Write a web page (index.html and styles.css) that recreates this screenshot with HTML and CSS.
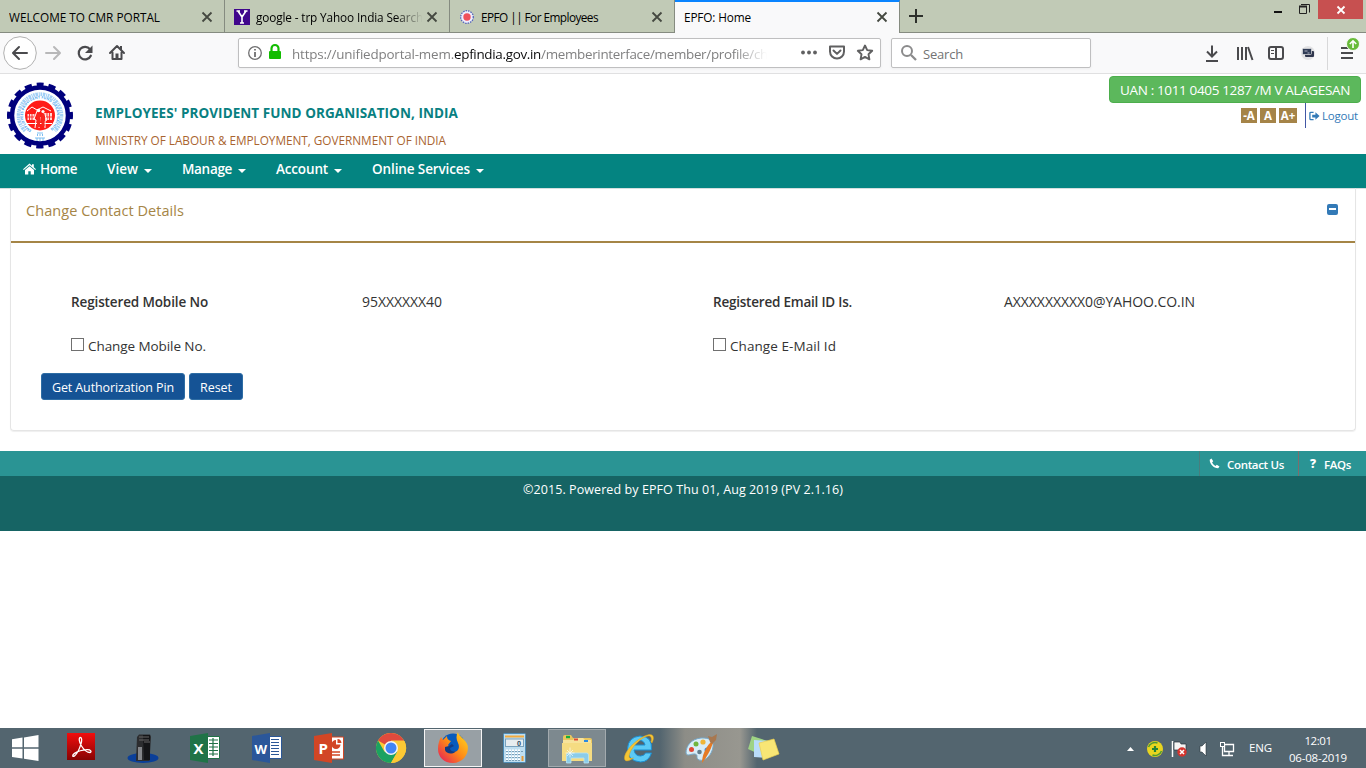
FILE: index.html
```html
<!DOCTYPE html>
<html lang="en">
<head>
<meta charset="utf-8">
<title>EPFO: Home</title>
<link rel="stylesheet" href="styles.css">
</head>
<body>
<div class="tabs">
  <div class="tab"><span class="tab-name"><span class="t s-tab1">WELCOME TO CMR PORTAL</span></span><svg class="x" viewBox="0 0 12 12"><path d="M1.500 1.500l9 9M10.500 1.500l-9 9"/></svg></div>
  <div class="tab"><svg class="fav" viewBox="0 0 16 16"><rect width="16" height="16" fill="#40068c"/><path d="M4 2l4 6 4-6M8 8v6M2.500 2h3.500M10 2h3.500M6 14h4" fill="none" stroke="#fff" stroke-width="1.600"/></svg><span class="tab-name fade"><span class="t s-tab2">google - trp Yahoo India Search</span></span><svg class="x" viewBox="0 0 12 12"><path d="M1.500 1.500l9 9M10.500 1.500l-9 9"/></svg></div>
  <div class="tab"><svg class="fav" viewBox="0 0 16 16"><circle cx="8" cy="8" r="6.300" fill="#eef" stroke="#5364b8" stroke-width="1.300" stroke-dasharray="1.500 1"/><circle cx="8" cy="8" r="3.700" fill="#f0505a"/></svg><span class="tab-name"><span class="t s-tab3">EPFO || For Employees</span></span><svg class="x" viewBox="0 0 12 12"><path d="M1.500 1.500l9 9M10.500 1.500l-9 9"/></svg></div>
  <div class="tab active"><span class="tab-name"><span class="t s-tab4">EPFO: Home</span></span><svg class="x" viewBox="0 0 12 12"><path d="M1.500 1.500l9 9M10.500 1.500l-9 9"/></svg></div>
  <div class="tab-rest">
    <svg class="plus" viewBox="0 0 14 14"><path d="M7 0v14M0 7h14" stroke="#2d302b" stroke-width="2"/></svg>
    <svg class="win" viewBox="0 0 50 20"><path d="M5 12h8" stroke="#111" stroke-width="2"/><path d="M30.500 6.500h7v7h-7z" fill="none" stroke="#222"/><path d="M30 6.500h8" stroke="#222" stroke-width="2"/><path d="M32 4.500h8.500v8" fill="none" stroke="#222"/></svg>
    <div class="close"><svg viewBox="0 0 10 10"><path d="M1.500 1.500l7 7M8.500 1.500l-7 7" stroke="#fff" stroke-width="1.800"/></svg></div>
  </div>
</div>
<div class="toolbar">
  <svg class="nav-icons" viewBox="0 0 238 40">
    <circle cx="20" cy="20" r="16.300" fill="#fff" stroke="#b1b1b1"/>
    <g fill="none" stroke="#4a4a4d" stroke-width="2" stroke-linecap="round" stroke-linejoin="round"><path d="M27 20H13.500M19 14l-6 6 6 6"/><path d="M46 20h13M54 14l6 6-6 6" stroke="#b8b8b9"/><path d="M90 16.200a6.300 6.300 0 1 0 .8 6.500" stroke-width="2.200"/></g>
    <path d="M92.500 12.500v7.500h-7.500z" fill="#4a4a4d"/>
    <path d="M110 20l7-7 7 7M112.500 19.500v6.500h9v-6.500" fill="none" stroke="#4a4a4d" stroke-width="2" stroke-linejoin="round" stroke-linecap="round"/><path d="M115.500 20.500h3v5.500h-3zM120 13h2v4h-2z" fill="#4a4a4d"/>
  </svg>
  <div class="urlbar">
    <svg class="info" viewBox="0 0 50 28"><circle cx="16" cy="14" r="6.300" fill="none" stroke="#6f6f70" stroke-width="1.300"/><path d="M16 13v5M16 10v1.600" stroke="#6f6f70" stroke-width="1.800"/><rect x="30" y="12" width="12" height="8" rx="1" fill="#12bc00"/><path d="M32.500 13v-3.500a3.500 3.500 0 0 1 7 0V13" fill="none" stroke="#12bc00" stroke-width="2.200"/></svg>
    <div class="url"><span class="t s-url1">https://unifiedportal-mem.</span><span class="t s-url2 dark">epfindia.gov.in</span><span class="t s-url3">/memberinterface/member/profile/ch</span></div>
    <svg class="acts" viewBox="0 0 90 28"><g fill="#606061"><circle cx="13" cy="13.500" r="1.900"/><circle cx="19" cy="13.500" r="1.900"/><circle cx="25" cy="13.500" r="1.900"/></g><path d="M40 7.500h14v5a7 7 0 0 1-14 0zM43.500 11.500l3.500 3.400 3.500-3.400" fill="none" stroke="#606061" stroke-width="2" stroke-linejoin="round" stroke-linecap="round"/><path d="M75 6.500l2.200 4.600 5 .7-3.700 3.500.9 5L75 17.900l-4.400 2.400.9-5-3.700-3.500 5-.7z" fill="none" stroke="#606061" stroke-width="1.900" stroke-linejoin="round"/></svg>
  </div>
  <div class="search"><svg viewBox="0 0 18 18"><circle cx="7" cy="7" r="5" fill="none" stroke="#8b8b8c" stroke-width="2"/><path d="M11 11l5 5" stroke="#8b8b8c" stroke-width="2.300"/></svg><span class="t s-search">Search</span></div>
  <svg class="right-icons" viewBox="0 0 166 40">
    <g fill="none" stroke="#4a4a4d" stroke-width="2"><path d="M12 12.500v11M7 18.500l5 5 5-5M6 28h12"/><path d="M38 14v13M42 14v13M46 14v13M48 14l4.500 13"/><rect x="69" y="14" width="14" height="12" rx="2"/><path d="M76 14v12"/><path d="M71 17.500h3M71 20.500h3" stroke-width="1"/></g>
    <circle cx="108" cy="20" r="7" fill="#e2e2e4"/><rect x="105" y="18" width="9" height="6" rx="1" fill="#30364d"/><rect x="102.500" y="15.500" width="9" height="6" rx="1" fill="#303c55" stroke="#e2e2e4" stroke-width=".7"/><path d="M104.500 18h3M107.500 20h2" stroke="#ccd" stroke-width=".8"/>
    <path d="M127.500 4v33" stroke="#d8d8d9"/><path d="M141 15h12M141 20h12M141 25h12" stroke="#4a4a4d" stroke-width="2"/>
    <circle cx="153" cy="11" r="6.500" fill="#68bb38" stroke="#f9f9fa"/><path d="M153 15V8M149.800 11l3.200-3.200 3.200 3.200" fill="none" stroke="#fff" stroke-width="1.600"/>
  </svg>
</div>
<main class="page">
  <header class="head">
    <svg class="logo" viewBox="0 0 80 80">
      <circle cx="40" cy="41.500" r="28" fill="#fff" stroke="#00007d" stroke-width="4.500"/>
      <circle cx="40" cy="41.500" r="31" fill="none" stroke="#00007d" stroke-width="4" stroke-dasharray="7.200 4.974" stroke-dashoffset="3.600" transform="rotate(-90 40 41.500)"/>
      <path d="M25 57a21.500 21.500 0 1 1 30 0" fill="none" stroke="#8bc4f4" stroke-width="3.600" stroke-dasharray="1.600 .7 2.500 .8 1 .7" opacity=".8"/>
      <circle cx="40" cy="41.500" r="15" fill="#ff1c18"/>
      <path id="ring" d="M31.500 56.200a17 17 0 1 1 17 0" fill="none"/>
      <text class="ring-text"><textPath href="#ring" textLength="86">EMPLOYEES PROVIDENT FUND ORGANISATION</textPath></text>
      <path d="M27 37l5-4 5 3 6-3 8 4M27 49.500h25" fill="none" stroke="#fff" stroke-width="1"/><path d="M27.500 40h7v6h-7zM45 39h7v7h-7z" fill="#ffd9d3"/><path d="M29.500 40v6M32 40v6M47 39v7M49.500 39v7M27 43h8M45 43h7" stroke="#f33"/><path d="M37 37l-3 8 2 1-1 8M44 39l3 7-2 1v7M40 43l-1 11" fill="none" stroke="#fff" stroke-width="1"/><circle cx="38.500" cy="36.500" r="1.800" fill="#fff"/><circle cx="43" cy="37.500" r="1.600" fill="#fff"/><path d="M37 40h3v13h-3zM41.500 40h3v12h-3z" fill="#f62720"/>
      <path d="M37 59h6M37.500 60v2M40 60v2M42.500 60v2M35 64h10M37 64v3M40 64v3M43 64v3" stroke="#6db7ef" stroke-width=".9"/>
    </svg>
    <div class="org"><div class="org-name"><span class="t s-org">EMPLOYEES' PROVIDENT FUND ORGANISATION, INDIA</span></div><div class="ministry"><span class="t s-min">MINISTRY OF LABOUR &amp; EMPLOYMENT, GOVERNMENT OF INDIA</span></div></div>
    <div class="user"><div class="uan"><span class="t s-uan">UAN : 1011 0405 1287 /M V ALAGESAN</span></div>
      <div class="tools"><b class="sz">-A</b><b class="sz">A</b><b class="sz wide">A+</b><div class="logout"><svg viewBox="0 0 12 10"><path d="M5 1H2Q1 1 1 2v6q0 1 1 1h3" fill="none" stroke="#337ab7" stroke-width="1.400"/><path d="M3.500 3.500H7V1l4.500 4L7 9V6.500H3.500z" fill="#337ab7"/></svg><span class="t s-logout">Logout</span></div></div></div>
  </header>
  <nav class="menu">
    <a class="m1"><svg class="house" viewBox="0 0 13 12"><path d="M6.500.5L9 2.700V1.200h1.800v3.100L13 6.200l-.8.900L6.500 2.200.8 7.100 0 6.200zM6.500 3.200L11 7v4.500H7.700V8.200H5.300v3.300H2V7z" fill="#fff"/></svg><span class="t s-home">Home</span></a>
    <a class="m2"><span class="t s-view">View</span><i class="caret"></i></a>
    <a class="m3"><span class="t s-manage">Manage</span><i class="caret"></i></a>
    <a class="m4"><span class="t s-account">Account</span><i class="caret"></i></a>
    <a class="m5"><span class="t s-online">Online Services</span><i class="caret"></i></a>
  </nav>
  <section class="panel">
    <div class="panel-head"><span class="t s-ccd">Change Contact Details</span><i class="minus"></i></div>
    <div class="grid">
      <b><span class="t s-rm">Registered Mobile No</span></b><span><span class="t s-95">95XXXXXX40</span></span><b><span class="t s-re">Registered Email ID Is.</span></b><span><span class="t s-ax">AXXXXXXXXX0@YAHOO.CO.IN</span></span>
    </div>
    <div class="checks"><label><i class="box"></i><span class="t s-cm">Change Mobile No.</span></label><label><i class="box"></i><span class="t s-ce">Change E-Mail Id</span></label></div>
    <div class="btns"><div class="btn pin"><span class="t s-pin">Get Authorization Pin</span></div><div class="btn reset"><span class="t s-reset">Reset</span></div></div>
  </section>
  <div class="links">
    <div class="link contact"><svg viewBox="0 0 11 11"><path d="M2.500.5L.7 1.800C.5 6 5 10.500 9.200 10.300l1.300-1.800-2.700-1.700-1.300 1.100C5 7.200 3.800 6 3.100 4.500l1.100-1.300z" fill="#fff"/></svg><span class="t s-cu">Contact Us</span></div>
    <div class="link faq"><b>?</b><span class="t s-faq">FAQs</span></div>
  </div>
  <footer class="foot"><span class="t s-foot">©2015. Powered by EPFO Thu 01, Aug 2019 (PV 2.1.16)</span></footer>
</main>
<div class="taskbar">
  <div class="start"><svg viewBox="0 0 28 28"><path d="M1 5.200l10.500-1.600v9.700H1zM13 3.400L27.500 1v12.300H13zM1 14.700h10.500v9.800L1 23zM13 14.700h14.500V27L13 24.700z" fill="#fff"/></svg></div>
  <div class="slot"><svg viewBox="0 0 40 40"><defs><linearGradient id="ac" x2="0" y2="1"><stop stop-color="#f20d0d"/><stop offset="1" stop-color="#870303"/></linearGradient></defs><rect x="6" y="5" width="28" height="27" fill="url(#ac)"/><path d="M19.500 9.500c-2 0-1.500 4.500 1 8.500s6 6.500 8.500 6.500c2-.5 1-3-3-2.800-5 .3-9 1.500-12.500 3.700-2.500 1.700-2.300 4 0 2.500 2.500-2 5-7 6.500-12 .9-3 1-6.400-.5-6.400z" fill="none" stroke="#fff" stroke-width="1.300"/></svg></div>
  <div class="slot"><svg viewBox="0 0 40 40"><ellipse cx="20" cy="30" rx="15.500" ry="5" fill="#0a3f99"/><path d="M14 9l2-2.500h11l1 2L26.500 33H13z" fill="#2c2d2f"/><path d="M15 19h4v13h-4z" fill="#84868a"/><path d="M20 7h7v25h-6z" fill="#141517"/><path d="M16 9h10M16 12h10M21 14h6" stroke="#666"/></svg></div>
  <div class="slot"><svg viewBox="0 0 40 40"><path d="M22 8.500h12.500v22H22z" fill="#fff" stroke="#207347"/><path d="M24 12h9M24 15.500h9M24 19h9M24 22.500h9M24 26h9M28 10v18" stroke="#207347" stroke-width="1.200"/><path d="M5 8l18-3v30L5 32z" fill="#207347"/><text x="8.500" y="26" class="office">X</text></svg></div>
  <div class="slot"><svg viewBox="0 0 40 40"><path d="M22 8.500h12.500v22H22z" fill="#fff" stroke="#2b5797"/><path d="M24 11.500h8M24 14.500h8M24 17.500h8M24 20.500h8M24 23.500h8M24 26.500h8" stroke="#2b5797" stroke-width="1.200"/><path d="M5 8l18-3v30L5 32z" fill="#2b579a"/><text x="7.500" y="25.500" class="office word">W</text></svg></div>
  <div class="slot"><svg viewBox="0 0 40 40"><path d="M22 9h12.500v22H22z" fill="#fff" stroke="#d24625"/><path d="M27 12a4.500 4.500 0 1 0 4.500 4.500H27zM28.500 11v4h4q-.5-4-4-4z" fill="#d24625"/><path d="M23 24h8M23 27h8" stroke="#d24625" stroke-width="1.300"/><path d="M5 8l18-3v30L5 32z" fill="#d24625"/><text x="9.500" y="26" class="office">P</text></svg></div>
  <div class="slot"><svg viewBox="0 0 40 40"><circle cx="20" cy="20" r="15" fill="#fcc934"/><path d="M20 20L7 12.500A15 15 0 0 1 33 12.500H20z" fill="#df4a3d"/><path d="M7 12.500A15 15 0 0 0 20 35l6.500-11.200L20 20 13.500 23.800z" fill="#1ba261"/><path d="M20 13h13.500A15 15 0 0 1 20 35l6.500-11.500z" fill="#fcc934"/><circle cx="20" cy="20" r="7" fill="#f4f4f4"/><circle cx="20" cy="20" r="5.500" fill="#4285f4"/></svg></div>
  <div class="slot tile on"><svg viewBox="0 0 40 40"><defs><linearGradient id="fx" x1="1" x2="0" y2="1"><stop stop-color="#ffdd22"/><stop offset=".5" stop-color="#ff8a16"/><stop offset="1" stop-color="#e31360"/></linearGradient></defs><circle cx="20" cy="18" r="12.500" fill="#075bbd"/><path d="M25 4c0 4 8 7 9.800 14C36 27 29 35 20 35S5 29 5 21c0-5 1-8 3-12l2 3 4-4c0 3 1 4 4 5l-3 4 1 2-2 1c0 5 6 6 9 3l-3 1c6 0 7-5 5-9-2-4-2-8 0-11z" fill="url(#fx)"/><path d="M12 19l4-1 3-2 2 2-4 2c0 3 3 4 6 3-3 4-10 3-11-1z" fill="#123b83"/></svg></div>
  <div class="slot"><svg viewBox="0 0 40 40"><rect x="8.500" y="5.500" width="22" height="29" rx="1" fill="#bfdef0" stroke="#4d8cb7"/><path d="M10 8.500h19" stroke="#f3aa3c" stroke-width="2"/><rect x="10.500" y="11" width="18" height="7.500" fill="#e7edf0" stroke="#7aa2bd"/><text x="22" y="18" class="zero">0</text><path d="M11 22.500h15M11 25.500h15M11 28.500h15M11 31.500h15" stroke="#fff" stroke-width="2.200" stroke-dasharray="2 1"/><path d="M11 23.500h18M11 26.500h15M11 29.500h15M11 32.500h15" stroke="#628ba7" stroke-width=".8" stroke-dasharray="2 1"/><path d="M27.500 28v5" stroke="#e79a36" stroke-width="2"/></svg></div>
  <div class="slot tile"><svg viewBox="0 0 40 40"><path d="M6 9q0-2 2-2h6l2 3h17q2 0 2 2v21H6z" fill="#eac65d"/><path d="M16 12l2-2h8l2 2h6v19H6V12z" fill="#f7e39b"/><path d="M5 15h30v18H5z" fill="#f5dc82"/><path d="M9 9h4" stroke="#16ad3c" stroke-width="2.400"/><path d="M17 11.500h4" stroke="#df4a36" stroke-width="2"/><path d="M27 13h4" stroke="#2b8be1" stroke-width="2"/><path d="M9.500 35v-8q0-2 2-2h18q2 0 2 2v8h-4.500v-5H14v5z" fill="#8bcce9" stroke="#b8e4f6" stroke-width=".8"/><path d="M13 19.500v10M8.500 25h9M10 22l6 6M16 22l-6 6" stroke="#fff" stroke-width=".8" opacity=".8"/></svg></div>
  <div class="slot"><svg viewBox="0 0 40 40"><path d="M32.500 22H15q1 6 6.500 6 3.500 0 5-3h6q-3 9-11 9-13-1-13-13Q9 9 21 8q12.500 0 11.500 14zM15.500 17H26q-1-4.500-5-4.500T15.500 17z" fill="#5bcaf6" stroke="#1c8ed1"/><path d="M33 15c3-6 1-9-3-8.500C22 8 7 20 5.500 29c-.7 5 3.500 5 9 1-4 1-5 0-4-4C13 18 23 9 29 8c3-.5 4 2 3 6z" fill="#f5c534" stroke="#d79e20" stroke-width=".5"/></svg></div>
  <div class="slot"><svg viewBox="0 0 40 40"><path d="M5 25c0-7 5-14 15-15 9-.5 13 3 12 9-1 7-7 15-14 13-4-2 0-5-4-6-4-.5-8 3-9-1z" fill="#d8edf8" stroke="#77a9ca"/><circle cx="15" cy="16" r="2.500" fill="#70b53e"/><circle cx="22" cy="14" r="2.600" fill="#efb639"/><circle cx="10.500" cy="21.500" r="2.500" fill="#e14836"/><circle cx="18.500" cy="24" r="2.300" fill="#627d8d"/><circle cx="26" cy="22" r="2.500" fill="#3b8adf"/><path d="M21 35c0-7 3-15 9-21l2 1c-3 8-6 14-11 20z" fill="#e57b26"/><path d="M29 14l-2-6 4 1 5-3-1 6-4 4z" fill="#a87850"/></svg></div>
  <div class="slot"><svg viewBox="0 0 40 40"><path d="M9 8l16 5-5 15L5 21z" fill="#9ed384"/><path d="M11 12l16 1-1 17-15-1z" fill="#b9dcfa"/><path d="M16 15l15-4 5 15-16 6z" fill="#f8e675" stroke="#ebd050" stroke-width=".7"/></svg></div>
  <div class="tray">
    <svg viewBox="0 0 120 40"><path d="M7 23l3.500-4 3.500 4z" fill="#fff"/><circle cx="35" cy="21" r="8" fill="#e8d51f"/><path d="M28.500 19a7 7 0 0 1 9-4M41.500 23a7 7 0 0 1-9 4" fill="none" stroke="#4c9a35" stroke-width="1.500"/><path d="M35 18v6M32 21h6" stroke="#238337" stroke-width="2.200"/><path d="M52.500 13v16" stroke="#fff" stroke-width="1.500"/><path d="M54 14h6l1 2h5v7h-6l-1-1h-5z" fill="#f4f4f4" stroke="#25323a" stroke-width=".7"/><circle cx="62" cy="24" r="4.700" fill="#d5342e"/><path d="M60 22l4 4M64 22l-4 4" stroke="#fff" stroke-width="1.500"/><path d="M80 18h2l4-4v14l-4-4h-2z" fill="#fff" stroke="#28333a" stroke-width=".6"/><path d="M104.500 16.500h9v7h-9zM109 24v3M105 27.500h8M102.500 18v9.500h3" fill="none" stroke="#fff" stroke-width="1.300"/><rect x="100.500" y="14.500" width="4" height="4" fill="#53656f" stroke="#fff"/></svg>
    <span class="lang"><span class="t s-eng">ENG</span></span>
    <div class="clock"><span class="t s-time">12:01</span><span class="t s-date">06-08-2019</span></div>
  </div>
</div>
</body>
</html>
```
FILE: styles.css
```css
*{box-sizing:border-box}
body{margin:0;width:1366px;height:768px;overflow:hidden;background:#fff;font-family:"Open Sans","Noto Sans",sans-serif;font-size:13.5px;color:#333;display:flex;flex-direction:column}
svg{display:block;flex:none}
.t{white-space:pre;display:inline-block}
.s-tab1{letter-spacing:-.011px}
.s-tab2{letter-spacing:-.135px}
.s-tab3{letter-spacing:-.554px;word-spacing:0}
.s-tab4{letter-spacing:-.142px}
.s-url1{letter-spacing:-.174px}
.s-url2{letter-spacing:-.298px}
.s-url3{letter-spacing:-.295px}
.s-search{letter-spacing:-.195px}
.s-org{letter-spacing:.065px}
.s-min{letter-spacing:-.041px}
.s-uan{letter-spacing:-.352px}
.s-logout{letter-spacing:-.208px}
.s-home{letter-spacing:-.512px}
.s-view{letter-spacing:.008px}
.s-manage{letter-spacing:-.323px}
.s-account{letter-spacing:-.154px}
.s-online{letter-spacing:-.11px}
.s-ccd{letter-spacing:.058px}
.s-rm{letter-spacing:-.128px}
.s-95{font-size:14px;letter-spacing:-.055px}
.s-re{letter-spacing:-.219px}
.s-ax{font-size:14px;letter-spacing:-.065px}
.s-cm{letter-spacing:-.074px}
.s-ce{letter-spacing:.073px}
.s-pin{letter-spacing:-.118px}
.s-reset{letter-spacing:-.034px}
.s-cu{letter-spacing:-.322px}
.s-faq{letter-spacing:-.348px}
.s-foot{letter-spacing:.084px}
.s-eng{letter-spacing:-.141px}
.s-time{letter-spacing:-.466px}
.s-date{letter-spacing:-.202px}
.tabs{height:33px;display:flex;background:#c1cab6;font-size:11.8px;color:#000}
.tab{width:225px;border-right:1px solid #858b80;border-bottom:1px solid #858b80;display:flex;align-items:center;padding:2px 11px 0 9px}
.tab.active{background:#f9f9fa;border-top:2px solid #0a84ff;border-bottom:0;padding:0 11px 1px 9px}
.tab-name{flex:1;overflow:hidden;white-space:nowrap;line-height:20px}
.fade{mask-image:linear-gradient(90deg,#000 82%,transparent 98%)}
.x{width:12px;height:12px;fill:none;stroke:#454941;stroke-width:1.8}
.fav{width:16px;height:16px;margin-right:6px}
.tab-rest{flex:1;border-bottom:1px solid #858b80;display:flex;align-items:flex-start}
.plus{width:14px;height:14px;margin:9px 0 0 9px}
.win{width:50px;height:20px;margin-left:346px}
.close{width:45px;height:19px;margin-left:-1px;background:#c75050;display:flex;align-items:center;justify-content:center}
.close svg{width:10px;height:10px}
.toolbar{height:41px;background:#f9f9fa;border-bottom:1px solid #e0e0e1;display:flex}
.nav-icons{width:238px;height:40px}
.urlbar,.search{height:30px;margin-top:5px;border:1px solid #bfbfc0;border-radius:2px;background:#fff;display:flex;align-items:center;box-shadow:0 1px 3px #0000000d}
.urlbar{width:643px}
.info{width:50px;height:28px}
.url{margin-left:3px;width:476px;overflow:hidden;display:flex;line-height:26px;padding-top:1px;color:#808081;font-size:13.4px;mask-image:linear-gradient(90deg,#000 93%,transparent)}
.dark{color:#0c0c0d}
.acts{width:90px;height:28px;margin-left:23px}
.search{width:200px;margin-left:10px;color:#737373;padding-left:8px;font-size:13px}
.search svg{width:18px;height:18px;margin-right:5px}
.s-search{padding-top:1px}
.right-icons{width:166px;height:40px;margin-left:109px}
.page{height:654px;display:flex;flex-direction:column}
.head{height:80px;display:flex}
.logo{width:80px;height:80px}
.ring-text{font-size:3.6px;fill:#4aa3ec;font-weight:700}
.org{margin-left:15px;flex:1;padding-top:28px}
.org-name{color:#088081;font-weight:700;line-height:22px;font-size:13.5px}
.ministry{color:#a9642f;line-height:22px;margin-top:5px;font-size:11.8px}
.user{width:257px;padding:2px 5px 0 0}
.uan{height:27px;background:#5cb85c;border:1px solid #4cae4c;border-radius:4px;color:#fff;line-height:27px;padding-left:10px;width:252px;white-space:nowrap}
.tools{display:flex;padding-left:132px}
.sz{width:16px;height:15px;margin:5px 3px 0 0;background:#a58448;color:#fff;font-size:11.5px;line-height:16px;text-align:center;white-space:nowrap}
.sz.wide{width:18px;margin-right:8px}
.logout{border-left:1px solid #4257a5;height:25px;display:flex;align-items:center;padding-left:3px;color:#337ab7;font-size:11.5px}
.logout svg{width:11px;height:10px;margin-right:2px}
.menu{height:35px;background:#048481;border-bottom:1px solid #d5dede;display:flex;padding-left:23px;color:#fff;font-weight:600;line-height:30px}
.menu a{display:flex;align-items:center;height:30px}
.house{width:13px;height:12px;margin-right:4px}
.m2,.m3,.m4,.m5{margin-left:30px}
.caret{border:4px solid transparent;border-top-color:#fff;border-bottom:0;margin:3px 0 0 6px}
.panel{height:243px;margin:-1px 10px 0;border:1px solid #e5e5e5;border-top:0;border-radius:0 0 4px 4px;box-shadow:0 1px 1px #0001}
.panel-head{height:55px;border-bottom:2px solid #a58546;display:flex;justify-content:space-between;padding:12px 17px 0 15px;color:#a58546;font-size:14.5px;line-height:22px}
.minus{width:11px;height:11px;border-radius:2px;border:solid #337ab7;border-width:4px 2px 5px;background:#fff;margin-top:4px}
.grid{display:grid;grid-template-columns:291px 351px 291px 1fr;padding:48px 0 0 60px;line-height:22px}
.grid>*{height:22px}
.grid b{font-weight:600}
.checks{display:grid;grid-template-columns:642px 1fr;padding:22px 0 0 60px;line-height:22px}
.checks label{display:flex}
.box{width:13px;height:13px;border:1px solid #707070;background:#fff;margin:3px 4px 0 0}
.btns{display:flex;gap:4px;padding:16px 0 0 30px}
.btn{height:27px;background:#155395;border:1px solid #2e6da4;border-radius:3px;color:#fff;padding-left:10px;line-height:28px;font-size:12.5px}
.pin{width:144px}
.reset{width:54px}
.links{height:25px;margin-top:20px;background:#2a9494;display:flex;justify-content:flex-end;color:#fff;font-weight:600;font-size:11.5px}
.link{display:flex;align-items:center;border-left:1px solid #4a7d7d;padding-left:9px;height:25px;line-height:25px}
.link .t{padding-top:2px}
.contact{width:99px}
.contact svg{width:11px;height:11px;margin-right:7px}
.faq{width:68px;border-left-color:#7d6d6d;padding-left:11px}
.faq b{width:14px;font-size:12px}
.foot{height:55px;background:#166464;color:#fff;text-align:center;padding-top:4px;line-height:20px;font-size:12.5px}
.taskbar{height:40px;background:linear-gradient(90deg,#0000 660px,#8d8d87 685px,#989790 740px,#0000 757px),#53656f;display:flex}
.start{width:50px;padding:6px 0 0 11px}
.start svg{width:28px;height:28px}
.slot{width:62px;display:flex;justify-content:center}
.slot svg{width:40px;height:40px}
.tile{width:58px;margin:1px 2px;height:38px;border:1px solid #a2aaae;background:#7d898f}
.tile svg{margin-top:-2px}
.on{border-color:#f5f5f5;background:#98a0a5}
.office{font-size:15px;font-weight:700;fill:#fff}
.word{font-size:13px}
.zero{font-size:7px;font-weight:700;fill:#36546d}
.tray{margin-left:326px;display:flex;color:#fff;font-size:11.5px}
.tray svg{width:120px;height:40px}
.lang{margin-left:9px;width:24px;line-height:40px}
.clock{width:90px;display:flex;flex-direction:column;align-items:center;line-height:17px;padding-top:4px}
```
